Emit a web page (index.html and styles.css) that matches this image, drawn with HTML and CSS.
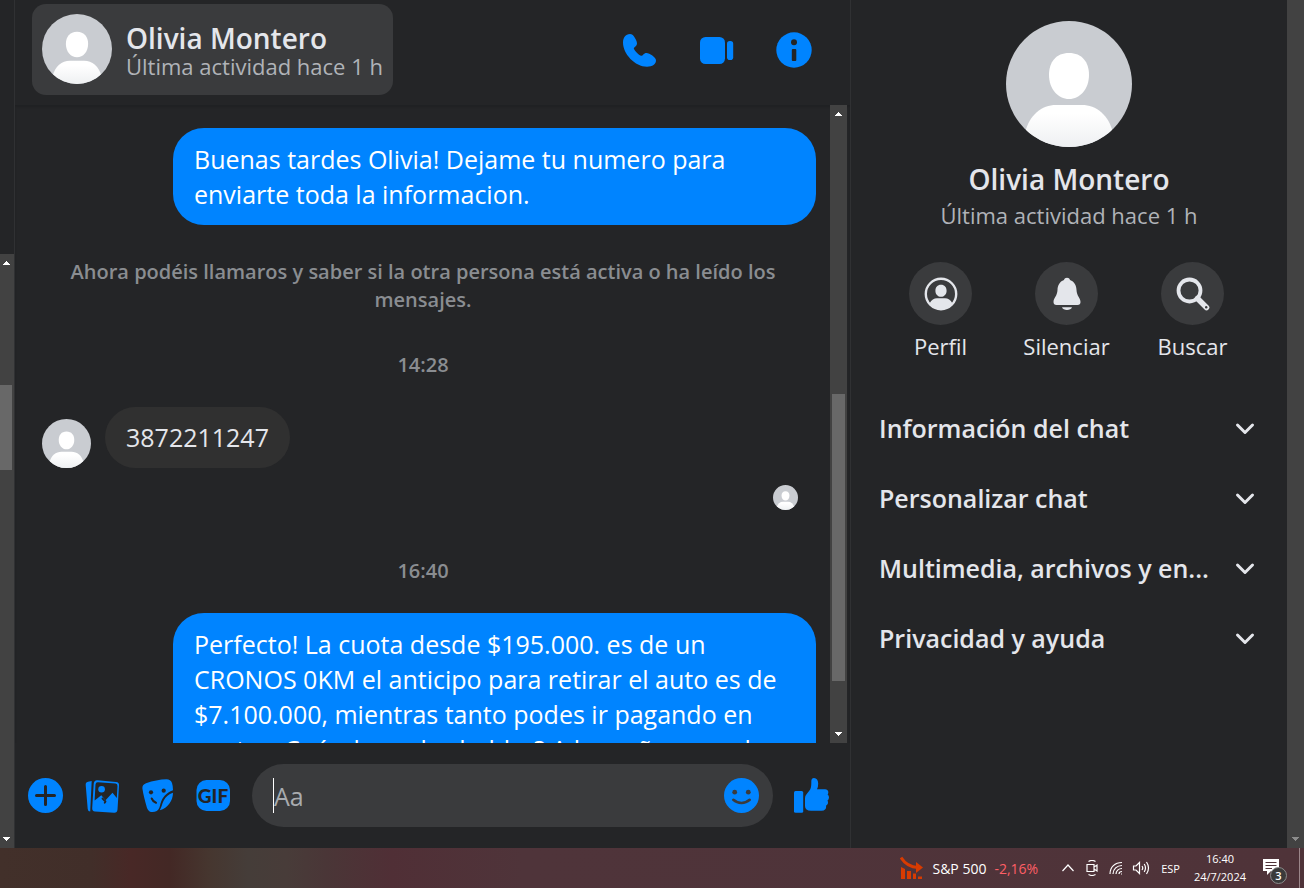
FILE: index.html
```html
<!DOCTYPE html>
<html lang="es">
<head>
<meta charset="utf-8">
<meta name="viewport" content="width=device-width, initial-scale=1">
<title>Olivia Montero</title>
<link rel="stylesheet" href="styles.css">
</head>
<body>
<svg class="defs" aria-hidden="true">
  <defs>
    <linearGradient id="torso" x1="0" y1="0" x2="0" y2="1"><stop offset="0.2" stop-color="#fff"/><stop offset="1" stop-color="#eef0f2"/></linearGradient>
    <symbol id="person" viewBox="0 0 126 126">
      <rect width="126" height="126" fill="#c9ccd1"/>
      <path d="M63 32C76 32 83 41 83 54C83 68 74 78 63 78C52 78 43 68 43 54C43 41 50 32 63 32Z" fill="#fff"/>
      <path d="M19 126V112C23 94 36 84 50 84H76C90 84 103 94 107 112V126Z" fill="url(#torso)"/>
    </symbol>
    <symbol id="chevron" viewBox="0 0 20 20"><path d="M2.500 7L10 14.500L17.500 7" fill="none" stroke="#e4e6eb" stroke-width="3" stroke-linecap="round" stroke-linejoin="round"/></symbol>
    <symbol id="up" viewBox="0 0 7 4"><path d="M0 4V3H1V2H2V1H3V0H4V1H5V2H6V3H7V4Z"/></symbol>
    <symbol id="down" viewBox="0 0 7 4"><path d="M0 0V1H1V2H2V3H3V4H4V3H5V2H6V1H7V0Z"/></symbol>
  </defs>
</svg>
<div class="app">
  <div class="sidebar">
    <div class="scrollbar scrollbar-list" aria-hidden="true">
      <svg class="arrow"><use href="#up"/></svg>
      <div class="thumb thumb-list"></div>
      <svg class="arrow arrow-end"><use href="#down"/></svg>
    </div>
  </div>
  <main class="chat">
    <header class="chat-header">
      <button class="contact">
        <svg class="avatar avatar-md"><use href="#person"/></svg>
        <span class="contact-text"><span class="contact-name">Olivia Montero</span><span class="contact-status">Última actividad hace 1 h</span></span>
      </button>
      <div class="calls">
        <button class="icon-btn" aria-label="Llamar"><svg viewBox="0 0 36 36"><path d="M8 2C3.500 2 1 6 1 10.500C1 22 13 34.700 25 34.700C30.500 34.700 34 32 34 28.500C34 26.500 32 24.800 30 23.300C28 21.800 25.500 20.500 23.500 21C21.500 21.500 20.800 24.200 19 23.800C16 22.500 12.800 19 11.800 16.500C12 15 15 14 15 11.500C15 9.500 13.500 6.500 12 4.500C11 3 10 2 8 2Z"/></svg></button>
        <button class="icon-btn" aria-label="Videollamada"><svg viewBox="0 0 36 36"><rect x="1" y="5" width="25" height="27" rx="5.500"/><rect x="28" y="9" width="6.200" height="19" rx="2.800"/></svg></button>
        <button class="icon-btn" aria-label="Información"><svg viewBox="0 0 36 36"><circle cx="18" cy="18" r="17.700"/><circle cx="18" cy="10.200" r="3" fill="#242527"/><rect x="15.800" y="17" width="4.500" height="12" rx="1" fill="#242527"/></svg></button>
      </div>
    </header>
    <div class="body">
      <div class="messages">
        <p class="bubble sent">Buenas tardes Olivia! Dejame tu numero para enviarte toda la informacion.</p>
        <p class="notice">Ahora podéis llamaros y saber si la otra persona está activa o ha leído los mensajes.</p>
        <time class="stamp">14:28</time>
        <div class="incoming">
          <svg class="avatar avatar-sm"><use href="#person"/></svg>
          <p class="bubble received">3872211247</p>
        </div>
        <svg class="avatar avatar-seen"><use href="#person"/></svg>
        <time class="stamp stamp-late">16:40</time>
        <p class="bubble sent">Perfecto! La cuota desde $195.000. es de un CRONOS 0KM el anticipo para retirar el auto es de $7.100.000, mientras tanto podes ir pagando en cuotas. Cuándo podes hablar? A la mañana o a la tarde?</p>
      </div>
      <div class="scrollbar" aria-hidden="true">
        <svg class="arrow"><use href="#up"/></svg>
        <div class="thumb thumb-chat"></div>
        <svg class="arrow arrow-end"><use href="#down"/></svg>
      </div>
    </div>
    <form class="composer">
      <button type="button" class="icon-btn" aria-label="Más acciones"><svg viewBox="0 0 36 36"><circle cx="17.500" cy="17.500" r="17.500"/><path class="cut" d="M17.500 8.500V26.500M8.500 17.500H26.500" stroke-width="3"/></svg></button>
      <button type="button" class="icon-btn" aria-label="Adjuntar fotos"><svg viewBox="0 0 36 36"><path d="M7.700 3L6.200 33.600Q4 33.500 3.700 31L1.700 7Q1.500 4.300 4 3.800Z"/><path d="M13.500 2.300L32 4Q35.300 4.300 35 7.500L33.500 31.500Q33.200 35 30 34.800L11 33.500Q8 33.200 8.200 30L9.700 5.800Q10 2 13.500 2.300Z"/><path fill="#242527" d="M14 4.200L31.500 5.600Q33.600 5.800 33.500 8L32.800 20L28.500 14.800L21.500 22.200L17.300 17.300L10.600 22.500L11.500 6.500Q11.700 4 14 4.200Z"/><circle cx="17.600" cy="11.200" r="3.300"/><path class="cut" d="M18.500 20.500L21.500 23.500L20.700 24.800" stroke-width="1.800"/></svg></button>
      <button type="button" class="icon-btn" aria-label="Elegir un sticker"><svg viewBox="0 0 36 36"><path d="M33 12.200C26 15 22.500 19 20.500 25.500C19.700 28.800 19.500 31 16.800 33C13 35 8.500 34.500 7 30Q3.500 18 2.400 10.500Q2 6.800 6 5.300C13 2.800 20 1.500 26.500 1.300Q30.500 1.300 32 5Q33 8 33 12.200Z"/><path d="M33 14.800C33 22.500 28 30 19.800 32.300C21.500 29.500 22 26 23.700 22.500C26 18.500 28.500 16.500 33 14.800Z"/><g fill="#242527"><circle cx="11" cy="14.300" r="2.100"/><circle cx="23.700" cy="12.700" r="2.100"/></g><path class="cut" d="M11.700 20.500Q13 23.700 16 24.800" stroke-width="2"/></svg></button>
      <button type="button" class="icon-btn" aria-label="Elegir un GIF"><svg viewBox="0 0 36 36"><rect x=".5" y="2" width="33.500" height="31" rx="10"/><text class="gif" x="17" y="25" text-anchor="middle">GIF</text></svg></button>
      <div class="field">
        <span class="caret"></span>
        <input class="input" type="text" placeholder="Aa" aria-label="Mensaje">
        <button type="button" class="icon-btn" aria-label="Elegir un emoji"><svg viewBox="0 0 36 36"><circle cx="17.500" cy="17.500" r="17.500"/><g fill="#3a3b3d"><circle cx="10.700" cy="14.200" r="2.400"/><circle cx="24.300" cy="14.200" r="2.400"/></g><path d="M9.300 21.800C14 26 21 26 25.700 21.800" fill="none" stroke="#3a3b3d" stroke-width="2.600" stroke-linecap="round"/></svg></button>
      </div>
      <button type="button" class="icon-btn" aria-label="Me gusta"><svg viewBox="0 0 36 36"><rect x="1" y="13" width="9.200" height="21.800" rx="1.500"/><path d="M12 20Q12 18 13.500 16.300L17 11.800Q18.500 9.500 18.300 3Q18.500 .1 21 .1Q25 .4 25.200 5.500Q25.200 9 24 11.200H32Q35.500 11.500 35.300 14.500Q35.200 15.800 34.600 16.500Q36.500 18 35.800 20.500Q35.500 21.800 34.500 22.500Q35.500 24.500 34.500 26.300Q34 27.200 33 27.800Q33.500 30 32.300 31.300Q31 32.800 28.500 32.800H18Q12 32.800 12 28Z"/></svg></button>
    </form>
  </main>
  <aside class="details">
    <svg class="avatar avatar-lg"><use href="#person"/></svg>
    <h1 class="details-name">Olivia Montero</h1>
    <p class="details-status">Última actividad hace 1 h</p>
    <div class="actions">
      <button class="action"><span class="action-icon"><svg viewBox="0 0 34 34"><circle cx="17" cy="17" r="15.200" fill="none" stroke="#e4e6eb" stroke-width="2.400"/><path d="M17 7.800C20.500 7.800 22.600 10.300 22.600 13.700C22.600 17.200 20.200 19.800 17 19.800C13.800 19.800 11.400 17.200 11.400 13.700C11.400 10.300 13.500 7.800 17 7.800ZM5.500 26.500C7.500 22.700 10 21.300 13 21.300H21C24 21.300 26.500 22.700 28.500 26.500C22 35 12 35 5.500 26.500Z"/></svg></span>Perfil</button>
      <button class="action"><span class="action-icon"><svg viewBox="0 0 34 34"><path d="M17 .8C18.500 .8 19.600 1.700 20 3C24.500 4.500 26.300 8.500 26.500 13C26.700 19 30.500 21 30.500 25Q30.500 28 27.500 28H6.500Q3.500 28 3.500 25C3.500 21 7.300 19 7.500 13C7.700 8.500 9.500 4.500 14 3C14.400 1.700 15.500 .8 17 .8ZM12 30.300H22C21 34 13 34 12 30.300Z"/></svg></span>Silenciar</button>
      <button class="action"><span class="action-icon"><svg viewBox="0 0 34 34"><circle cx="13.500" cy="13.500" r="11" fill="none" stroke="#e4e6eb" stroke-width="3.800"/><path d="M21.500 21.500L30.500 30.500" stroke="#e4e6eb" stroke-width="5.500" stroke-linecap="round"/><circle cx="30.200" cy="30.300" r="1.200" fill="#3a3b3d"/></svg></span>Buscar</button>
    </div>
    <button class="section"><span class="section-label">Información del chat</span><svg class="chevron"><use href="#chevron"/></svg></button>
    <button class="section"><span class="section-label">Personalizar chat</span><svg class="chevron"><use href="#chevron"/></svg></button>
    <button class="section"><span class="section-label">Multimedia, archivos y en...</span><svg class="chevron"><use href="#chevron"/></svg></button>
    <button class="section"><span class="section-label">Privacidad y ayuda</span><svg class="chevron"><use href="#chevron"/></svg></button>
  </aside>
  <div class="scrollbar scrollbar-page" aria-hidden="true"><svg class="arrow arrow-end"><use href="#down"/></svg></div>
</div>
<footer class="taskbar">
  <button class="stock">
    <svg class="stock-icon" viewBox="0 0 24 24" fill="#d83b01"><path d="M1 11L5 13V23H1ZM7 15H11V23H7ZM13 17.500H16V23H13ZM18 20.500H22V23H18Z"/><path d="M1 1.500Q7 11 18 11.500" fill="none" stroke="#d83b01" stroke-width="3"/><path d="M16 6L23 11.500L16 17Z"/></svg>
    <span>S&amp;P 500</span><span class="loss">-2,16%</span>
  </button>
  <div class="tray">
    <svg viewBox="0 0 16 16"><path d="M2.500 11L8 5L13.500 11"/></svg>
    <svg viewBox="0 0 16 16"><path d="M4.500 1.500Q8-.5 11.500 1.500M4.500 14.500Q8 16.500 11.500 14.500M3 4.500H10V11.500H3ZM10 7L13 5V11L10 9"/></svg>
    <svg viewBox="0 0 16 16"><path d="M2 14C2 7 7 2.500 14 2.500M5 14C5 9 9 5.500 14 5.500M8 14C8 11 10.500 8.500 14 8.500M11 14C11 12.500 12 11.500 14 11.500M13 14H14"/></svg>
    <svg class="sound" viewBox="0 0 18 16"><path d="M1.500 6H4L7.500 2.500V13.500L4 10H1.500ZM10 6Q11.500 8 10 10M12.200 4Q14.800 8 12.200 12M14.500 2Q18.500 8 14.500 14"/></svg>
  </div>
  <span class="language">ESP</span>
  <time class="clock">16:40<br>24/7/2024</time>
  <button class="notifications" aria-label="3 notificaciones">
    <svg viewBox="0 0 18 18"><path d="M1 1H17V13H9L5 17V13H1Z" fill="#fff"/><path d="M3.500 4.500H14.500M3.500 7.500H14.500M3.500 10.500H10" stroke="#4f3339" stroke-width="1.200"/></svg>
    <span class="badge">3</span>
  </button>
</footer>
</body>
</html>
```
FILE: styles.css
```css
* { box-sizing: border-box; }
body {
  margin: 0;
  height: 100vh;
  display: flex;
  flex-direction: column;
  overflow: hidden;
  background: #242527;
  color: #e4e6eb;
  font-family: "Open Sans", "Noto Sans", sans-serif;
}
p, h1 { margin: 0; }
button {
  margin: 0;
  padding: 0;
  border: 0;
  background: none;
  color: inherit;
  font: inherit;
  cursor: pointer;
}
svg { display: block; flex: none; }
.defs { position: absolute; width: 0; height: 0; }
.app { flex: 1; min-height: 0; display: flex; }

.sidebar {
  width: 15px;
  display: flex;
  flex-direction: column;
  justify-content: flex-end;
  border-right: 1px solid #303133;
}
.scrollbar {
  width: 17px;
  display: flex;
  flex-direction: column;
  align-items: center;
  background: #424242;
}
.scrollbar-list { width: 14px; height: 70%; padding-right: 2px; }
.scrollbar-page { flex: none; }
.scrollbar-page .arrow { fill: #8c8c8c; }
.arrow { width: 7px; height: 4px; margin-top: 7px; fill: #fff; }
.arrow-end { margin-top: auto; margin-bottom: 7px; }
.thumb { background: #686868; }
.thumb-list { width: 100%; height: 85px; margin-top: 120px; }
.thumb-chat { width: 13px; height: 45%; margin-top: 278px; }

.avatar { border-radius: 50%; }
.avatar-md { width: 70px; height: 70px; }
.avatar-sm { width: 49px; height: 49px; }
.avatar-seen { width: 25px; height: 25px; align-self: flex-end; margin: 17px 18px 0 0; }
.avatar-lg { width: 126px; height: 126px; align-self: center; }

.chat {
  flex: 1;
  min-width: 0;
  display: flex;
  flex-direction: column;
  border-right: 1px solid #303133;
}
.chat-header {
  display: flex;
  align-items: center;
  justify-content: space-between;
  padding: 4px 38px 10px 17px;
}
.contact {
  display: flex;
  align-items: center;
  gap: 14px;
  padding: 10px 10px 11px;
  border-radius: 14px;
  background: #3a3b3d;
  text-align: left;
}
.contact-text { display: flex; flex-direction: column; padding-top: 4px; }
.contact-name { font-size: 28px; font-weight: 600; line-height: 30px; }
.contact-status { font-size: 22px; line-height: 26px; color: #b0b3b8; }
.calls { display: flex; gap: 41px; }
.icon-btn { width: 36px; height: 36px; flex: none; }
.icon-btn svg { width: 36px; height: 36px; fill: #0084ff; }
.cut { fill: none; stroke: #242527; stroke-linecap: round; stroke-linejoin: round; }
.icon-btn .gif { font: 900 19px Lato, sans-serif; fill: #242527; }

.body {
  flex: 1;
  min-height: 0;
  display: flex;
  padding-right: 3px;
  box-shadow: inset 0 2px 2px #202123;
}
.messages {
  flex: 1;
  min-width: 0;
  display: flex;
  flex-direction: column;
  overflow: hidden;
  padding: 23px 14px 0 27px;
}
.bubble {
  flex: none;
  padding: 13px 21px;
  border-radius: 31px;
  font-size: 25px;
  line-height: 35px;
}
.sent {
  align-self: flex-end;
  max-width: 643px;
  padding-top: 14px;
  background: #0084ff;
  color: #fff;
}
.received { background: #303030; }
.notice {
  align-self: center;
  margin: 33px 12px 0 0;
  padding: 0 20px;
  font-size: 20px;
  font-weight: 600;
  line-height: 28px;
  text-align: center;
  color: #8a8d91;
}
.stamp {
  margin: 37px 12px 0 0;
  font-size: 20px;
  font-weight: 600;
  line-height: 28px;
  text-align: center;
  color: #8a8d91;
}
.stamp-late { margin-top: 47px; margin-bottom: 28px; }
.incoming { display: flex; align-items: flex-end; gap: 14px; margin-top: 28px; }

.composer {
  display: flex;
  align-items: center;
  gap: 20px;
  padding: 21px 21px 21px 13px;
}
.field {
  flex: 1;
  min-width: 0;
  height: 63px;
  display: flex;
  align-items: center;
  padding: 0 13px 0 21px;
  border-radius: 32px;
  background: #3a3b3d;
}
.caret { width: 1px; height: 35px; background: #fff; }
.input {
  flex: 1;
  min-width: 0;
  padding: 2px 0 0;
  border: 0;
  outline: 0;
  background: none;
  color: #e4e6eb;
  font: 25px/35px "Open Sans", "Noto Sans", sans-serif;
}
.input::placeholder { color: #a8abaf; opacity: 1; }

.details {
  width: 436px;
  flex: none;
  display: flex;
  flex-direction: column;
  padding: 21px 28px 0;
}
.details-name { margin-top: 14px; font-size: 28px; font-weight: 600; line-height: 36px; text-align: center; }
.details-status { margin-top: 3px; font-size: 22px; line-height: 30px; text-align: center; color: #b0b3b8; }
.actions { display: flex; justify-content: center; margin: 32px 5px 32px 0; }
.action {
  width: 126px;
  flex: none;
  display: flex;
  flex-direction: column;
  align-items: center;
  gap: 6px;
  font-size: 22px;
  line-height: 30px;
}
.action-icon {
  width: 63px;
  height: 63px;
  display: grid;
  place-items: center;
  border-radius: 50%;
  background: #3a3b3d;
}
.action-icon svg { width: 34px; height: 34px; fill: #e4e6eb; }
.section {
  height: 70px;
  display: flex;
  align-items: center;
  justify-content: space-between;
  padding-right: 4px;
  font-size: 25px;
  font-weight: 600;
  text-align: left;
}
.section-label { white-space: nowrap; }
.chevron { width: 20px; height: 20px; }

.taskbar {
  height: 40px;
  flex: none;
  display: flex;
  align-items: center;
  justify-content: flex-end;
  padding-right: 4px;
  background: linear-gradient(90deg, #42302a 0, #412e29 7%, #482826 10%, #432825 13%, #46362f 16%, #453d39 19%, #483c39 22%, #4a3637 25%, #502f36 30%, #4f343a 40%, #4f3339 100%);
  color: #fff;
  font-size: 14px;
}
.stock { display: flex; align-items: center; gap: 8px; margin-right: 22px; }
.stock-icon { width: 24px; height: 24px; }
.loss { color: #ff5f66; }
.tray { display: flex; gap: 8px; }
.tray svg { width: 16px; height: 16px; fill: none; stroke: #fff; stroke-width: 1.2; }
.tray .sound { width: 18px; }
.language { margin-left: 11px; font-size: 11px; }
.clock { margin-left: 14px; font-size: 11px; line-height: 18px; text-align: center; }
.notifications {
  position: relative;
  width: 54px;
  height: 40px;
  display: flex;
  align-items: flex-start;
  padding: 10px 0 0 16px;
  border-right: 1px solid #9b868a;
}
.notifications svg { width: 18px; height: 18px; }
.badge {
  position: absolute;
  left: 24px;
  top: 19px;
  width: 17px;
  height: 17px;
  border: 1px solid #8c8c8c;
  border-radius: 50%;
  background: #3a3a3a;
  font-size: 11px;
  font-weight: 600;
  line-height: 15px;
  text-align: center;
}
```
